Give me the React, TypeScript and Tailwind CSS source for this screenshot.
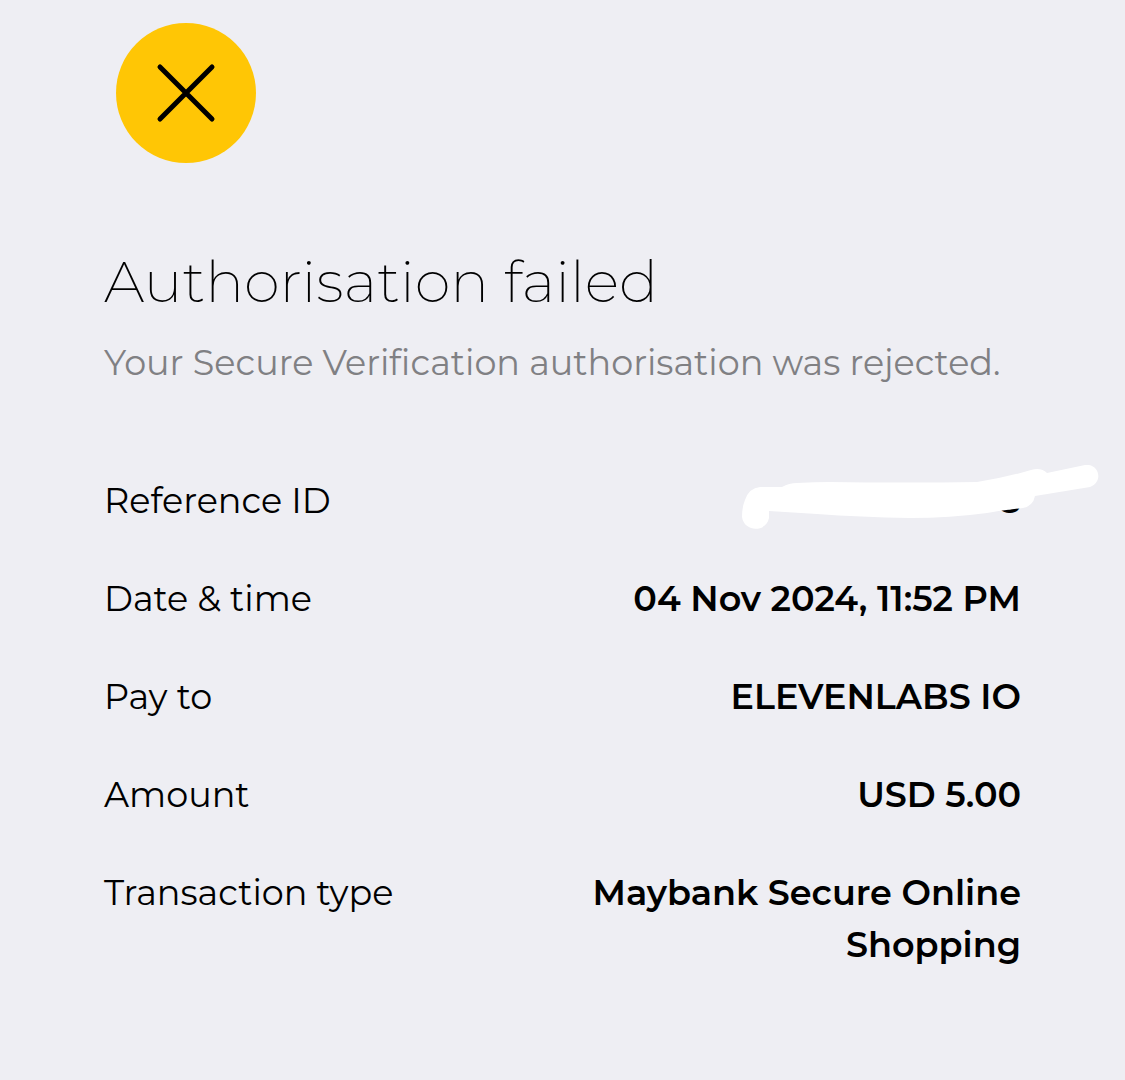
import React from "react";

const rows = [
  { label: "Date & time", value: "04 Nov 2024, 11:52 PM" },
  { label: "Pay to", value: "ELEVENLABS IO" },
  { label: "Amount", value: "USD 5.00" },
  { label: "Transaction type", value: "Maybank Secure Online Shopping" },
];

export default function App() {
  return (
    <main className="min-h-screen bg-[#eeeef3] px-[104px] pt-[23px] pb-12 font-['Montserrat','Inter',sans-serif] text-black">
      <div className="ml-3 flex size-[140px] items-center justify-center rounded-full bg-[#ffc605]">
        <svg viewBox="0 0 60 60" className="size-[60px]" fill="none" stroke="#000" strokeWidth="5" strokeLinecap="round" aria-hidden="true">
          <path d="M4 4 56 56M56 4 4 56" />
        </svg>
      </div>
      <h1 className="mt-[83px] text-[58px] leading-[72px] font-extralight">Authorisation failed</h1>
      <p className="mt-[19px] text-[35px] leading-[52px] whitespace-nowrap text-[#808083]">Your Secure Verification authorisation was rejected.</p>
      <dl className="mt-[86px] flex flex-col gap-[46px] text-[35px] leading-[52px]">
        <div className="flex justify-between">
          <dt>Reference ID</dt>
          <dd className="relative font-semibold">
            <span>8</span>
            <svg viewBox="0 0 360 70" className="absolute top-[-10px] right-[-79px] h-[70px] w-[360px]" fill="#fff" aria-hidden="true">
              <path d="M2 52Q2 42 5 35Q9 23 20 22L42 22Q49 18 57 18Q75 17 90 17Q165 18 237 17Q264 13 291 5Q301 2 307 8L345 0C359 -2 364 17 350 22L295 31Q293 41 283 43Q265 45 247 48Q210 53 170 53Q120 52 77 49L29 46V53C26 68 4 67 2 52Z" />
            </svg>
          </dd>
        </div>
        {rows.map((row) => (
          <div key={row.label} className="flex justify-between">
            <dt className="whitespace-nowrap">{row.label}</dt>
            <dd className="max-w-[460px] text-right font-semibold">{row.value}</dd>
          </div>
        ))}
      </dl>
    </main>
  );
}
